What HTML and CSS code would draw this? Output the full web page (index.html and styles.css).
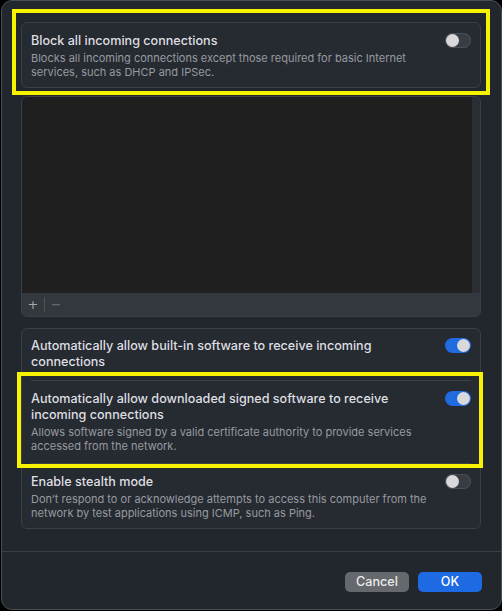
FILE: index.html
```html
<!DOCTYPE html>
<html lang="en">
<head>
<meta charset="utf-8">
<title>Firewall Options</title>
<link rel="stylesheet" href="styles.css">
</head>
<body>
<div class="window">
  <main class="content">
    <section class="card card-block">
      <div class="row">
        <div class="text">
          <div class="title">Block all incoming connections</div>
          <div class="desc">Blocks all incoming connections except those required for basic Internet<br>services, such as DHCP and IPSec.</div>
        </div>
        <span class="toggle"></span>
      </div>
      <div class="highlight hl-block"></div>
    </section>

    <section class="list">
      <div class="list-body">
        <div class="list-items"></div>
        <div class="list-gutter"></div>
      </div>
      <div class="list-bar">
        <span class="lb-btn">+</span>
        <span class="lb-sep"></span>
        <span class="lb-btn lb-minus">−</span>
      </div>
    </section>

    <section class="card card-group">
      <div class="row">
        <div class="text">
          <div class="title">Automatically allow built-in software to receive incoming<br>connections</div>
        </div>
        <span class="toggle on"></span>
      </div>
      <div class="sep"></div>
      <div class="row row-signed">
        <div class="text">
          <div class="title">Automatically allow downloaded signed software to receive<br>incoming connections</div>
          <div class="desc">Allows software signed by a valid certificate authority to provide services<br>accessed from the network.</div>
        </div>
        <span class="toggle on"></span>
        <div class="highlight hl-signed"></div>
      </div>
      <div class="sep"></div>
      <div class="row">
        <div class="text">
          <div class="title">Enable stealth mode</div>
          <div class="desc">Don’t respond to or acknowledge attempts to access this computer from the<br>network by test applications using ICMP, such as Ping.</div>
        </div>
        <span class="toggle"></span>
      </div>
    </section>
  </main>

  <footer class="footer">
    <button class="btn btn-cancel">Cancel</button>
    <button class="btn btn-ok">OK</button>
  </footer>
</div>
</body>
</html>
```

FILE: styles.css
```css
* { box-sizing: border-box; }

html, body {
  margin: 0;
  padding: 0;
  background: #000;
}

body {
  width: 502px;
  height: 611px;
  font-family: Inter, "Noto Sans", "Liberation Sans", sans-serif;
  -webkit-font-smoothing: antialiased;
}

.window {
  width: 501px;
  height: 610px;
  margin-left: 1px;
  background: #22262d;
  border: 1px solid #4a4e55;
  border-radius: 11px;
  display: flex;
  flex-direction: column;
  overflow: hidden;
}

.content {
  padding: 21px 20px 0 19px;
  display: flex;
  flex-direction: column;
}

.card {
  position: relative;
  background: #262a31;
  border: 1px solid #3b3f47;
  border-radius: 6px;
  padding: 0 9px;
}

.card-block {
  padding-top: 10px;
  padding-bottom: 8px;
}

.row {
  position: relative;
  display: flex;
  align-items: flex-start;
  justify-content: space-between;
}

.text {
  white-space: nowrap;
}

.title {
  font-size: 12.6px;
  line-height: 16px;
  font-weight: 500;
  color: #dedfe1;
}

.desc {
  font-size: 11px;
  line-height: 14px;
  color: #979aa0;
  margin-top: 2px;
}

.toggle {
  position: relative;
  flex: none;
  width: 26px;
  height: 15px;
  border-radius: 8px;
  background: #383c43;
  box-shadow: inset 0 0 0 1px #4a4e55;
}

.toggle::after {
  content: "";
  position: absolute;
  top: 1px;
  left: 1px;
  width: 13px;
  height: 13px;
  border-radius: 50%;
  background: #d9d9db;
}

.toggle.on {
  background: #1f6be0;
  box-shadow: none;
}

.toggle.on::after {
  left: 12px;
}

.highlight {
  position: absolute;
  border: 4px solid #f6f200;
  pointer-events: none;
}

.hl-block {
  top: -14px;
  left: -10px;
  right: -10px;
  bottom: -8px;
}

/* list */
.list {
  margin-top: 8px;
  height: 221px;
  border: 1px solid #3b3f47;
  border-radius: 6px;
  overflow: hidden;
  display: flex;
  flex-direction: column;
  background: #33373d;
}

.list-body {
  flex: 1;
  display: flex;
}

.list-items {
  flex: 1;
  background: #1f1f20;
}

.list-gutter {
  width: 8px;
  background: #2a2d33;
}

.list-bar {
  height: 23px;
  flex: none;
  display: flex;
  align-items: center;
  padding-left: 4px;
  background: #33373e;
}

.lb-btn {
  width: 14px;
  text-align: center;
  font-family: "DejaVu Sans", sans-serif;
  font-size: 13px;
  line-height: 14px;
  color: #a5a7ab;
}

.lb-minus {
  color: #6e7177;
  margin-left: 4px;
}

.lb-sep {
  width: 1px;
  height: 15px;
  background: #50535a;
  margin-left: 4px;
}

/* group card */
.card-group {
  margin-top: 11px;
  padding-top: 9px;
  padding-bottom: 8px;
}

.sep {
  height: 1px;
  background: #3b3f47;
  margin: 10px 0 10px 0;
}

.hl-signed {
  top: -19px;
  left: -14px;
  right: -12px;
  bottom: -15px;
}

/* footer */
.footer {
  margin-top: 22px;
  border-top: 1px solid #3a3e45;
  padding: 20px 19px 0 0;
  display: flex;
  justify-content: flex-end;
  gap: 9px;
}

.btn {
  width: 64px;
  height: 20px;
  border: none;
  border-radius: 5px;
  font-family: Inter, "Noto Sans", "Liberation Sans", sans-serif;
  font-size: 12.6px;
  font-weight: 500;
  color: #ebebec;
  padding: 0;
  line-height: 20px;
}

.btn-cancel {
  background: #65686d;
}

.btn-ok {
  background: #1d6ae2;
  color: #fff;
}
```
